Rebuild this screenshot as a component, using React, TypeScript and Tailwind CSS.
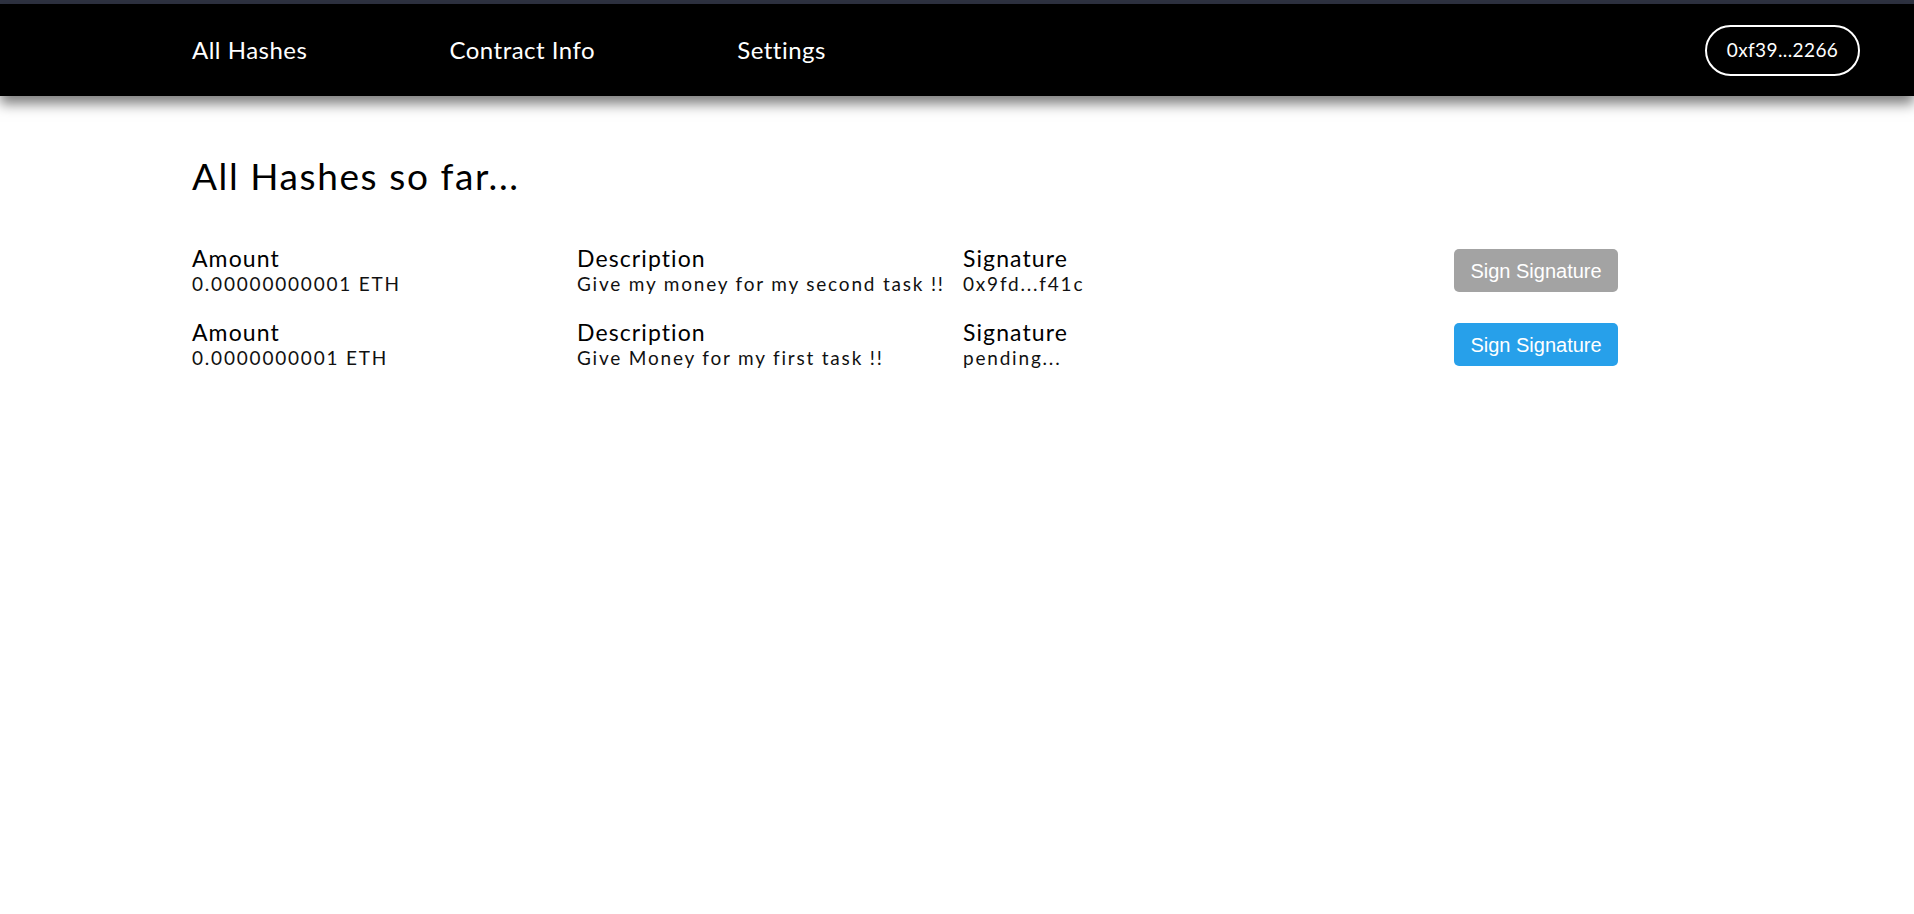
import React from "react";

const rows = [
  { amount: "0.00000000001 ETH", desc: "Give my money for my second task !!", sig: "0x9fd...f41c", signed: true },
  { amount: "0.0000000001 ETH", desc: "Give Money for my first task !!", sig: "pending...", signed: false },
];

function Cell({ label, value }: { label: string; value: string }) {
  return (
    <div className="flex flex-col">
      <span className="text-[23px] leading-[28px] tracking-[1.1px] text-black">{label}</span>
      <span className="text-[19px] leading-[24px] tracking-[1.8px] text-[#111]">{value}</span>
    </div>
  );
}

export default function App() {
  return (
    <div className="min-h-[914px] bg-white" style={{ fontFamily: "Lato, 'Open Sans', sans-serif" }}>
      <div className="h-[4px] bg-[#2e3241]" />
      <nav className="relative z-10 flex h-[92px] items-center bg-black pl-[192px] pr-[54px] shadow-[0_8px_12px_rgba(0,0,0,0.5)]">
        <div className="flex items-center gap-[142px] text-[24px] tracking-[0.5px] text-white">
          <a className="cursor-pointer">All Hashes</a>
          <a className="cursor-pointer">Contract Info</a>
          <a className="cursor-pointer">Settings</a>
        </div>
        <button className="ml-auto flex h-[51px] w-[155px] items-center justify-center rounded-full border-2 border-white text-[19px] tracking-[0.4px] text-white">
          0xf39...2266
        </button>
      </nav>
      <main className="pl-[192px] pr-[192px] pt-[58px]">
        <h1 className="text-[37px] leading-[44px] tracking-[1.6px] text-black">All Hashes so far...</h1>
        <div className="mt-[46px] flex flex-col gap-[22px]">
          {rows.map((r, i) => (
            <div key={i} className="grid grid-cols-[385px_386px_383px_1fr]">
              <Cell label="Amount" value={r.amount} />
              <Cell label="Description" value={r.desc} />
              <Cell label="Signature" value={r.sig} />
              <div className="pl-[108px] pt-[5px]">
                <button
                  className={
                    "h-[43px] w-[164px] rounded-[5px] text-[20px] text-white " +
                    (r.signed ? "bg-[#a3a3a3]" : "bg-[#27a0ea]")
                  }
                  style={{ fontFamily: "'Liberation Sans', Arial, sans-serif" }}
                >
                  Sign Signature
                </button>
              </div>
            </div>
          ))}
        </div>
      </main>
    </div>
  );
}
